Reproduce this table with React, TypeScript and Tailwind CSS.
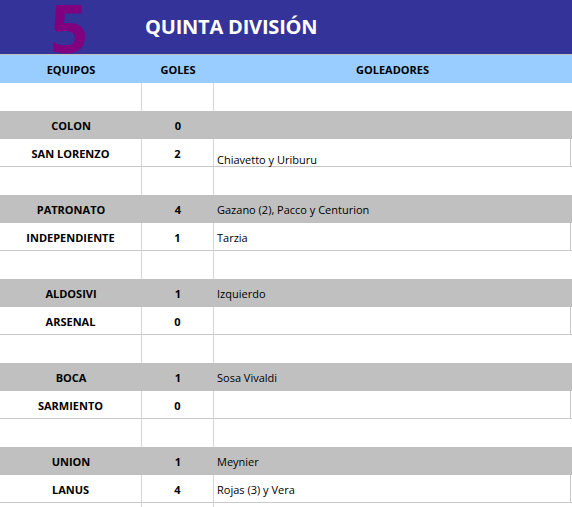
const matches = [
  { home: "COLON", hg: "0", hs: "", away: "SAN LORENZO", ag: "2", as: "Chiavetto y Uriburu", low: true },
  { home: "PATRONATO", hg: "4", hs: "Gazano (2), Pacco y Centurion", away: "INDEPENDIENTE", ag: "1", as: "Tarzia" },
  { home: "ALDOSIVI", hg: "1", hs: "Izquierdo", away: "ARSENAL", ag: "0", as: "" },
  { home: "BOCA", hg: "1", hs: "Sosa Vivaldi", away: "SARMIENTO", ag: "0", as: "" },
  { home: "UNION", hg: "1", hs: "Meynier", away: "LANUS", ag: "4", as: "Rojas (3) y Vera" },
];

function Spacer() {
  return (
    <div className="flex h-[28px] bg-white">
      <div className="w-[142px] border-r border-[#d4d4d4]" />
      <div className="w-[72px] border-r border-[#d4d4d4]" />
      <div className="w-[357px]" />
    </div>
  );
}

export default function App() {
  return (
    <div className="w-[572px] h-[507px] overflow-hidden bg-white text-black" style={{ fontFamily: '"Open Sans", sans-serif' }}>
      {/* title band */}
      <div className="h-[54px] bg-[#333399] flex overflow-hidden">
        <div className="w-[142px] h-[54px] flex justify-center">
          <span className="text-[#800080] font-bold text-[66px] leading-[54px] ml-[-4px]">5</span>
        </div>
        <div className="h-[54px] flex items-center pl-[3px] text-white font-bold text-[20px] tracking-[-0.2px]">
          QUINTA DIVISIÓN
        </div>
      </div>
      <div className="h-px bg-[#c0c0c0]" />

      {/* column headers */}
      <div className="flex h-[28px] bg-[#99ccff] items-center pt-[2px] font-bold text-[11px]">
        <div className="w-[142px] text-center">EQUIPOS</div>
        <div className="w-[72px] text-center">GOLES</div>
        <div className="w-[357px] text-center">GOLEADORES</div>
      </div>

      <Spacer />

      {matches.map((m, i) => (
        <div key={i}>
          <div className="flex h-[28px] bg-[#c0c0c0] items-center pt-[2px] text-[11px]">
            <div className="w-[142px] text-center font-bold">{m.home}</div>
            <div className="w-[72px] text-center font-bold">{m.hg}</div>
            <div className="w-[357px] pl-[3px]">{m.hs}</div>
          </div>
          <div className="flex h-[28px] bg-white border-b border-[#c8c8c8] text-[11px]">
            <div className="w-[142px] border-r border-[#d4d4d4] flex items-center justify-center pt-[3px] font-bold">{m.away}</div>
            <div className="w-[72px] border-r border-[#d4d4d4] flex items-center justify-center pt-[3px] font-bold">{m.ag}</div>
            <div className={`w-[357px] border-r border-[#c8c8c8] flex pl-[3px] ${m.low ? "items-end leading-none pb-[1px]" : "items-center pt-[3px]"}`}>
              {m.as}
            </div>
          </div>
          {i < matches.length - 1 && <Spacer />}
        </div>
      ))}
      <Spacer />
    </div>
  );
}
